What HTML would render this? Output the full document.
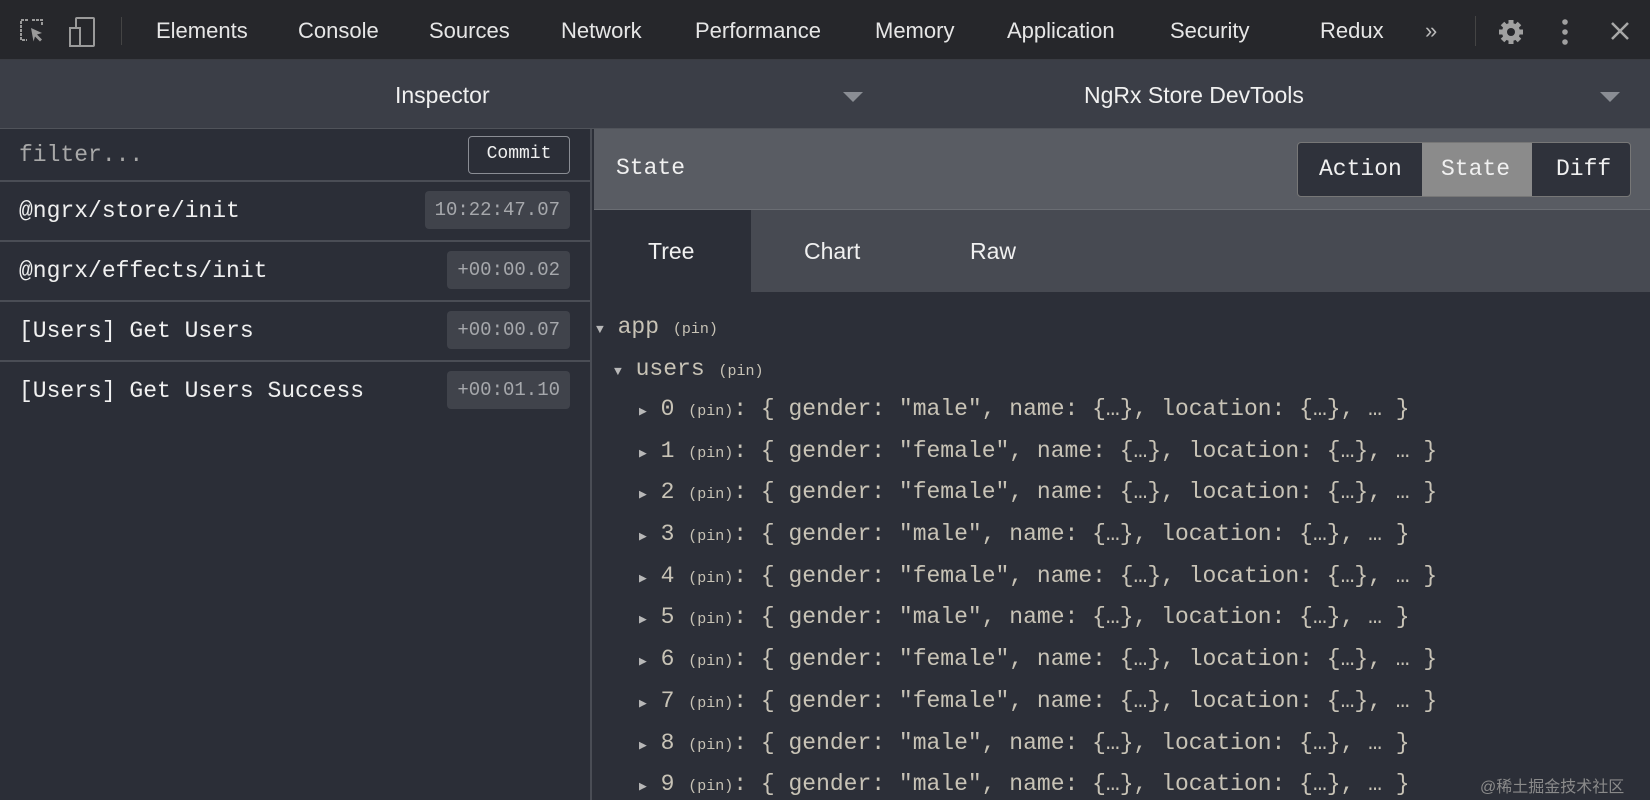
<!DOCTYPE html>
<html><head><meta charset="utf-8"><style>
*{margin:0;padding:0;box-sizing:border-box}
body{width:1650px;height:800px;overflow:hidden;background:#2c2f38;font-family:"Liberation Sans",sans-serif;position:relative}
.a{position:absolute}
.mono{font-family:"Liberation Mono",monospace}
#top{left:0;top:0;width:1650px;height:60px;background:#26272b;border-bottom:1px solid #3a3c42}
#top .t{position:absolute;top:18px;font-size:22px;color:#e6e6e6}
#bar2{left:0;top:60px;width:1650px;height:69px;background:#3b3e47;border-bottom:1px solid #50535a}
#bar2 .t{position:absolute;top:22px;font-size:23px;color:#f0f0f0}
.tri{position:absolute;width:0;height:0;border-left:10px solid transparent;border-right:10px solid transparent;border-top:10px solid #8a8d94}
#left{left:0;top:129px;width:592px;height:671px;background:#2b2e37;border-right:2px solid #4a4d55}
.row{position:absolute;left:0;width:590px;height:60px;border-bottom:2px solid #4a4d55;color:#f0f0f0;font-size:23px}
.row span.l{position:absolute;left:19px;top:16px}
.ts{position:absolute;right:20px;top:9px;height:38px;background:#40434b;border-radius:4px;color:#a6a8ac;font-size:19px;padding:0 10px;line-height:38px}
.tree{position:absolute;font-size:23px;color:#c8c3b6;white-space:pre}
.tree small{font-size:15px}
.ar{font-size:13px;color:#b8b8b8}
</style></head><body>
<div id="top" class="a">
 <svg class="a" style="left:18px;top:18px" width="30" height="28" viewBox="0 0 30 28"><path d="M10 2H3v20h6M14 2h10v6" stroke="#9a9a9a" stroke-width="2" fill="none" stroke-dasharray="3 1"/><path d="M13 10l11 5-5 1.5 5 5-2 2-5-5-1.5 5z" fill="#9a9a9a"/></svg>
 <svg class="a" style="left:68px;top:16px" width="30" height="32" viewBox="0 0 30 32"><rect x="8" y="2" width="18" height="28" rx="1" stroke="#9a9a9a" stroke-width="2" fill="none"/><rect x="2" y="12" width="10" height="18" stroke="#9a9a9a" stroke-width="2" fill="#26272b"/></svg>
 <div class="a" style="left:121px;top:17px;width:1px;height:28px;background:#444"></div>
 <span class="t" style="left:156px">Elements</span>
 <span class="t" style="left:298px">Console</span>
 <span class="t" style="left:429px">Sources</span>
 <span class="t" style="left:561px">Network</span>
 <span class="t" style="left:695px">Performance</span>
 <span class="t" style="left:875px">Memory</span>
 <span class="t" style="left:1007px">Application</span>
 <span class="t" style="left:1170px">Security</span>
 <span class="t" style="left:1320px">Redux</span>
 <span class="t" style="left:1425px;color:#bbb">»</span>
 <div class="a" style="left:1475px;top:16px;width:1px;height:30px;background:#444"></div>
 <svg class="a" style="left:1497px;top:18px" width="28" height="28" viewBox="0 0 28 28"><g fill="#a0a0a0"><circle cx="14" cy="14" r="9"/><g stroke="#a0a0a0" stroke-width="5"><path d="M14 2v24M2 14h24M5.5 5.5l17 17M22.5 5.5l-17 17"/></g></g><circle cx="14" cy="14" r="4" fill="#26272b"/></svg>
 <svg class="a" style="left:1560px;top:18px" width="10" height="28"><circle cx="5" cy="4" r="2.8" fill="#a0a0a0"/><circle cx="5" cy="14" r="2.8" fill="#a0a0a0"/><circle cx="5" cy="24" r="2.8" fill="#a0a0a0"/></svg>
 <svg class="a" style="left:1610px;top:21px" width="20" height="20"><path d="M2 2L18 18M18 2L2 18" stroke="#a8a8a8" stroke-width="2.5"/></svg>
</div>
<div id="bar2" class="a">
 <span class="t" style="left:395px">Inspector</span>
 <div class="tri" style="left:843px;top:32px"></div>
 <span class="t" style="left:1084px">NgRx Store DevTools</span>
 <div class="tri" style="left:1600px;top:32px"></div>
</div>
<div id="left" class="a">
 <div class="row" style="top:0;height:53px"><span class="l mono" style="color:#a8a8a8;top:13px">filter...</span>
  <div class="a mono" style="left:468px;top:7px;width:102px;height:38px;border:1px solid #8a8d94;border-radius:4px;font-size:18px;color:#f0f0f0;text-align:center;line-height:35px">Commit</div></div>
 <div class="row mono" style="top:53px"><span class="l">@ngrx/store/init</span><span class="ts">10:22:47.07</span></div>
 <div class="row mono" style="top:113px"><span class="l">@ngrx/effects/init</span><span class="ts">+00:00.02</span></div>
 <div class="row mono" style="top:173px"><span class="l">[Users] Get Users</span><span class="ts">+00:00.07</span></div>
 <div class="row mono" style="top:233px;border:none"><span class="l">[Users] Get Users Success</span><span class="ts">+00:01.10</span></div>
</div>
<div class="a" style="left:594px;top:129px;width:1056px;height:81px;background:#595c63;border-bottom:1px solid #6a6d73">
 <span class="a mono" style="left:22px;top:26px;font-size:23px;color:#f0f0f0">State</span>
 <div class="a mono" style="left:703px;top:13px;width:334px;height:55px;border:1px solid #777;border-radius:4px;background:#2f323b;font-size:23px;color:#f0f0f0;overflow:hidden">
  <span class="a" style="left:21px;top:13px">Action</span>
  <div class="a" style="left:124px;top:0;width:110px;height:55px;background:#8b8b8b"></div>
  <span class="a" style="left:143px;top:13px">State</span>
  <span class="a" style="left:258px;top:13px">Diff</span>
 </div>
</div>
<div class="a" style="left:594px;top:210px;width:1056px;height:82px;background:#474a52">
 <div class="a" style="left:0;top:0;width:157px;height:82px;background:#2c2f38"></div>
 <span class="a" style="left:54px;top:28px;font-size:23px;color:#f0f0f0">Tree</span>
 <span class="a" style="left:210px;top:28px;font-size:23px;color:#f0f0f0">Chart</span>
 <span class="a" style="left:376px;top:28px;font-size:23px;color:#f0f0f0">Raw</span>
</div>
<div class="tree mono" style="left:596px;top:314px"><span class="ar">▼</span> app <small>(pin)</small></div>
<div class="tree mono" style="left:614px;top:356px"><span class="ar">▼</span> users <small>(pin)</small></div>
<div class="tree mono" style="left:639px;top:396px"><span class="ar">▶</span> 0 <small>(pin)</small>: { gender: "male", name: {…}, location: {…}, … }</div>
<div class="tree mono" style="left:639px;top:438px"><span class="ar">▶</span> 1 <small>(pin)</small>: { gender: "female", name: {…}, location: {…}, … }</div>
<div class="tree mono" style="left:639px;top:479px"><span class="ar">▶</span> 2 <small>(pin)</small>: { gender: "female", name: {…}, location: {…}, … }</div>
<div class="tree mono" style="left:639px;top:521px"><span class="ar">▶</span> 3 <small>(pin)</small>: { gender: "male", name: {…}, location: {…}, … }</div>
<div class="tree mono" style="left:639px;top:563px"><span class="ar">▶</span> 4 <small>(pin)</small>: { gender: "female", name: {…}, location: {…}, … }</div>
<div class="tree mono" style="left:639px;top:604px"><span class="ar">▶</span> 5 <small>(pin)</small>: { gender: "male", name: {…}, location: {…}, … }</div>
<div class="tree mono" style="left:639px;top:646px"><span class="ar">▶</span> 6 <small>(pin)</small>: { gender: "female", name: {…}, location: {…}, … }</div>
<div class="tree mono" style="left:639px;top:688px"><span class="ar">▶</span> 7 <small>(pin)</small>: { gender: "female", name: {…}, location: {…}, … }</div>
<div class="tree mono" style="left:639px;top:730px"><span class="ar">▶</span> 8 <small>(pin)</small>: { gender: "male", name: {…}, location: {…}, … }</div>
<div class="tree mono" style="left:639px;top:771px"><span class="ar">▶</span> 9 <small>(pin)</small>: { gender: "male", name: {…}, location: {…}, … }</div>
<span class="a" style="left:1480px;top:773px;font-size:16px;color:#8a8a8a;font-family:'Liberation Sans','Noto Sans CJK SC',sans-serif">@稀土掘金技术社区</span>
</body></html>
